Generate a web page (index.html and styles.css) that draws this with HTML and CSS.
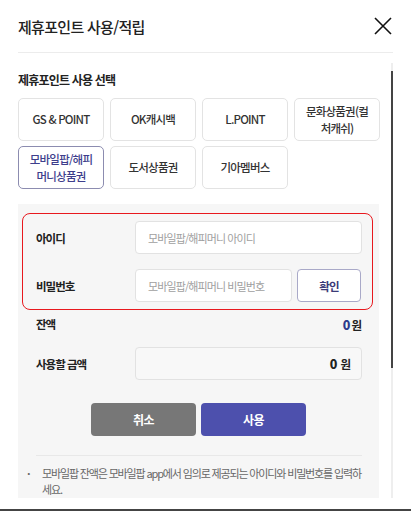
FILE: index.html
```html
<!DOCTYPE html>
<html lang="ko">
<head>
<meta charset="UTF-8">
<meta name="viewport" content="width=device-width, initial-scale=1.0">
<title>제휴포인트 사용/적립</title>
<link rel="stylesheet" href="styles.css">
</head>
<body>

<div class="popup">
  <div class="header">
    <h2>제휴포인트 사용/적립</h2>
    <button class="close" type="button" aria-label="닫기">
      <svg width="18" height="18" viewBox="0 0 18 18"><path d="M1 1 L17 17 M17 1 L1 17" stroke="#111" stroke-width="1.6" fill="none"/></svg>
    </button>
  </div>

  <div class="scroll">
    <div class="content">
      <h3>제휴포인트 사용 선택</h3>
      <div class="point-grid">
        <button type="button" class="point">GS &amp; POINT</button>
        <button type="button" class="point">OK캐시백</button>
        <button type="button" class="point">L.POINT</button>
        <button type="button" class="point">문화상품권(컬<br>처캐쉬)</button>
        <button type="button" class="point selected">모바일팝/해피<br>머니상품권</button>
        <button type="button" class="point">도서상품권</button>
        <button type="button" class="point">기아멤버스</button>
      </div>

      <div class="panel">
        <div class="login-box">
          <div class="row">
            <label for="userId">아이디</label>
            <input type="text" id="userId" placeholder="모바일팝/해피머니 아이디">
          </div>
          <div class="row">
            <label for="userPw">비밀번호</label>
            <input type="password" id="userPw" class="short" placeholder="모바일팝/해피머니 비밀번호">
            <button type="button" class="confirm">확인</button>
          </div>
        </div>

        <div class="row balance">
          <span class="label">잔액</span>
          <span class="amount"><b>0</b>원</span>
        </div>
        <div class="row use">
          <span class="label">사용할 금액</span>
          <div class="amount-box"><b>0</b> 원</div>
        </div>

        <div class="actions">
          <button type="button" class="btn cancel">취소</button>
          <button type="button" class="btn submit">사용</button>
        </div>

        <ul class="notes">
          <li>모바일팝 잔액은 모바일팝 app에서 임의로 제공되는 아이디와 비밀번호를 입력하세요.</li>
        </ul>
      </div>
    </div>
    <div class="scrollbar"><div class="thumb"></div></div>
  </div>
</div>

</body>
</html>
```

FILE: styles.css
```css
body {
  margin: 0;
  background-color: #fff;
  font-family: "Noto Sans CJK KR", "Noto Sans", sans-serif;
  color: #222;
}
.popup {
  width: 411px;
  height: 511px;
  box-sizing: border-box;
  border-bottom: 2px solid #444;
}
.header {
  margin: 0 18px;
  height: 52px;
  border-bottom: 1px solid #ececec;
  display: flex;
  align-items: center;
  justify-content: space-between;
}
.header h2 {
  margin: 0;
  font-size: 15px;
  font-weight: 500;
  letter-spacing: -0.7px;
  color: #222;
}
.close {
  border: none;
  background: none;
  padding: 0;
  margin-right: 1px;
  width: 18px;
  height: 18px;
  cursor: pointer;
}
.scroll {
  position: relative;
  margin-top: 10px;
  height: 435px;
  overflow: hidden;
}
.content {
  padding: 8px 0 0 18px;
  width: 361px;
}
.content h3 {
  margin: 0 0 9px;
  font-size: 12px;
  font-weight: 700;
  letter-spacing: -0.8px;
  color: #222;
  line-height: 18px;
}
.point-grid {
  display: grid;
  grid-template-columns: repeat(4, 86px);
  grid-auto-rows: 43px;
  column-gap: 6px;
  row-gap: 5px;
}
.point {
  border: 1px solid #e3e3e3;
  border-radius: 5px;
  background-color: #fff;
  font-family: inherit;
  font-size: 11.5px;
  font-weight: 500;
  letter-spacing: -0.8px;
  line-height: 17px;
  color: #333;
  padding: 0;
  cursor: pointer;
}
.point.selected {
  border-color: #8c8cb0;
  color: #3e3e8c;
}
.panel {
  margin-top: 15px;
  background-color: #f6f6f6;
  padding: 9px 6px 12px 4px;
}
.login-box {
  border: 1.5px solid #e8191e;
  border-radius: 8px;
  padding: 7px 10px 7px 13px;
  display: flex;
  flex-direction: column;
  gap: 15px;
}
.row {
  display: flex;
  align-items: center;
  gap: 5px;
}
.row label,
.row .label {
  width: 94px;
  font-size: 11.5px;
  font-weight: 700;
  letter-spacing: -1px;
  color: #222;
}
.row input {
  flex: 1;
  height: 33px;
  box-sizing: border-box;
  border: 1px solid #e2e2e2;
  border-radius: 4px;
  padding: 0 12px;
  font-family: inherit;
  font-size: 11px;
  letter-spacing: -0.9px;
  color: #333;
  background-color: #fff;
}
.row input::placeholder {
  color: #a0a0a0;
}
.row input.short {
  flex: none;
  width: 157px;
}
.confirm {
  width: 64px;
  height: 33px;
  border: 1px solid #a9a9c8;
  border-radius: 4px;
  background-color: #fff;
  font-family: inherit;
  font-size: 11.5px;
  font-weight: 700;
  letter-spacing: -0.8px;
  color: #3b3b78;
  cursor: pointer;
}
.balance {
  justify-content: space-between;
  padding: 0 11px 0 14px;
  margin-top: 5px;
  height: 18px;
}
.balance .amount {
  font-size: 11.5px;
  font-weight: 700;
  color: #222;
}
.balance .amount b {
  color: #2d3a8c;
  font-size: 12.5px;
  margin-right: 1px;
}
.use {
  padding: 0 11px 0 14px;
  margin-top: 14px;
  gap: 5px;
}
.amount-box {
  flex: 1;
  height: 33px;
  box-sizing: border-box;
  border: 1px solid #e2e2e2;
  border-radius: 4px;
  background-color: #f8f8f8;
  display: flex;
  align-items: center;
  justify-content: flex-end;
  padding-right: 10px;
  font-size: 11.5px;
  font-weight: 700;
  color: #222;
}
.amount-box b {
  font-size: 12.5px;
  margin-right: 3px;
}
.actions {
  display: flex;
  justify-content: center;
  gap: 5px;
  margin-top: 23px;
  padding-left: 2px;
}
.btn {
  width: 105px;
  height: 33px;
  border: none;
  border-radius: 4px;
  font-family: inherit;
  font-size: 12px;
  font-weight: 700;
  letter-spacing: -0.6px;
  color: #fff;
  cursor: pointer;
}
.cancel {
  background-color: #777;
}
.submit {
  background-color: #4d50ad;
}
.notes {
  list-style: none;
  margin: 19px 11px 0 14px;
  padding: 9px 0 0 0;
  border-top: 1px solid #e8e8e8;
}
.notes li {
  position: relative;
  padding-left: 6px;
  font-size: 11px;
  line-height: 16px;
  letter-spacing: -1.15px;
  color: #666;
}
.notes li::before {
  content: "·";
  position: absolute;
  left: -9px;
  top: 0;
  font-weight: 700;
}
.scrollbar {
  position: absolute;
  left: 391px;
  top: 0;
  width: 2px;
  height: 100%;
  background-color: #eeeeee;
}
.thumb {
  height: 297px;
  margin-top: 8px;
  background-color: #444;
}
```
